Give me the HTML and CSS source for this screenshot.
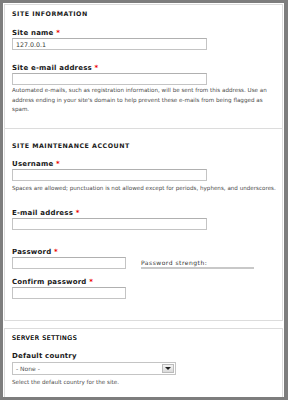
FILE: index.html
```html
<!DOCTYPE html>
<html lang="en">
<head>
    <meta charset="UTF-8">
    <title>Configure site</title>
    <link rel="stylesheet" href="styles.css">
</head>
<body>
<div class="page">
    <div class="fieldset first">
        <h2 class="title">Site information</h2>
        <div class="item">
            <label class="label">Site name <span class="req">*</span></label>
            <input class="text" type="text" value="127.0.0.1">
        </div>
        <div class="item gap">
            <label class="label">Site e-mail address <span class="req">*</span></label>
            <input class="text" type="text" value="">
            <div class="desc">Automated e-mails, such as registration information, will be sent from this address. Use an address ending in your site's domain to help prevent these e-mails from being flagged as spam.</div>
        </div>
    </div>

    <div class="fieldset second">
        <h2 class="title">Site maintenance account</h2>
        <div class="item">
            <label class="label">Username <span class="req">*</span></label>
            <input class="text" type="text" value="">
            <div class="desc help">Spaces are allowed; punctuation is not allowed except for periods, hyphens, and underscores.</div>
        </div>
        <div class="item mail">
            <label class="label">E-mail address <span class="req">*</span></label>
            <input class="text" type="text" value="">
        </div>
        <div class="pass-row">
            <div class="item">
                <label class="label">Password <span class="req">*</span></label>
                <input class="text short" type="password" value="">
            </div>
            <div class="strength">
                <div class="strength-text">Password strength:</div>
                <div class="strength-bar"></div>
            </div>
        </div>
        <div class="item confirm">
            <label class="label">Confirm password <span class="req">*</span></label>
            <input class="text short" type="password" value="">
        </div>
    </div>

    <div class="fieldset third">
        <h2 class="title light">Server settings</h2>
        <div class="item country">
            <label class="label">Default country</label>
            <div class="select">
                <span class="select-value">- None -</span>
                <span class="select-btn">
                    <svg width="8" height="5" viewBox="0 0 8 5"><path d="M1 1h6L4 4z" fill="#222"/></svg>
                </span>
            </div>
            <div class="desc help">Select the default country for the site.</div>
        </div>
    </div>
</div>
</body>
</html>
```
FILE: styles.css
```css
html,body,div,h2,label{
    margin:0;
    padding:0;
}
body{
    background:#7d7d7d;
    font-family:"DejaVu Sans", Verdana, sans-serif;
    color:#222;
    height:400px;
    overflow:hidden;
}
.page{
    background:#fff;
    margin:3px 4px 0 3px;
    height:394px;
    overflow:hidden;
}
.fieldset{
    border:1px solid #dcdcdc;
    margin:1px 1px 0 1px;
    padding:5px 3px 13px 7px;
}
.fieldset.second{margin-top:0;border-top:0;padding-top:13px;padding-bottom:21px;}
.fieldset.third{margin-top:7px;padding-top:5px;}

.title{
    font-size:6.3px;
    line-height:8px;
    font-weight:bold;
    text-transform:uppercase;
    letter-spacing:.5px;
    color:#1a1a1a;
}
.title.light{font-weight:normal;color:#111;text-shadow:0 0 .3px #111;}

.item{margin-top:11px;}
.item.gap{margin-top:14px;}
.fieldset.second .item{margin-top:10px;}
.fieldset.second .item.mail{margin-top:16px;}
.fieldset.second .item.confirm{margin-top:9px;}
.fieldset.third .item{margin-top:10px;}

.label{
    display:block;
    font-size:7px;
    line-height:9px;
    font-weight:bold;
    letter-spacing:.2px;
    color:#1a1a1a;
}
.req{color:#e00;}

.text{
    display:block;
    box-sizing:border-box;
    width:195px;
    height:12px;
    margin:0;
    padding:0 3px;
    border:1px solid #c4c4c4;
    border-top-color:#b0b0b0;
    background:#fff;
    font-family:"DejaVu Sans", Verdana, sans-serif;
    font-size:6.3px;
    color:#333;
    outline:none;
}
.text.short{width:114px;}

.desc{
    margin-top:1px;
    font-size:5.6px;
    line-height:9.5px;
    color:#4a4a4a;
}
.desc.help{margin-top:3px;}

.pass-row{
    display:flex;
    align-items:flex-start;
    margin-top:18px;
}
.pass-row .item{margin-top:0;}
.fieldset.second .pass-row .item{margin-top:0;}
.strength{
    margin-left:15px;
    padding-top:11px;
    width:113px;
}
.strength-text{
    font-size:6px;
    line-height:7px;
    letter-spacing:.5px;
    color:#333;
}
.strength-bar{
    margin-top:1px;
    height:2px;
    background:#c8c8c8;
}

.select{
    display:flex;
    align-items:center;
    box-sizing:border-box;
    width:164px;
    height:13px;
    margin-top:1px;
    border:1px solid #c4c4c4;
    padding:0 1px 0 3px;
}
.select-value{
    flex:1;
    font-size:6px;
    color:#555;
}
.select-btn{
    display:flex;
    align-items:flex-end;
    justify-content:center;
    box-sizing:border-box;
    width:12px;
    height:9px;
    border:1px solid #bbb;
    background:linear-gradient(#f4f4f4,#dadada);
    padding-bottom:1px;
}
.select-btn svg{display:block;}
```
